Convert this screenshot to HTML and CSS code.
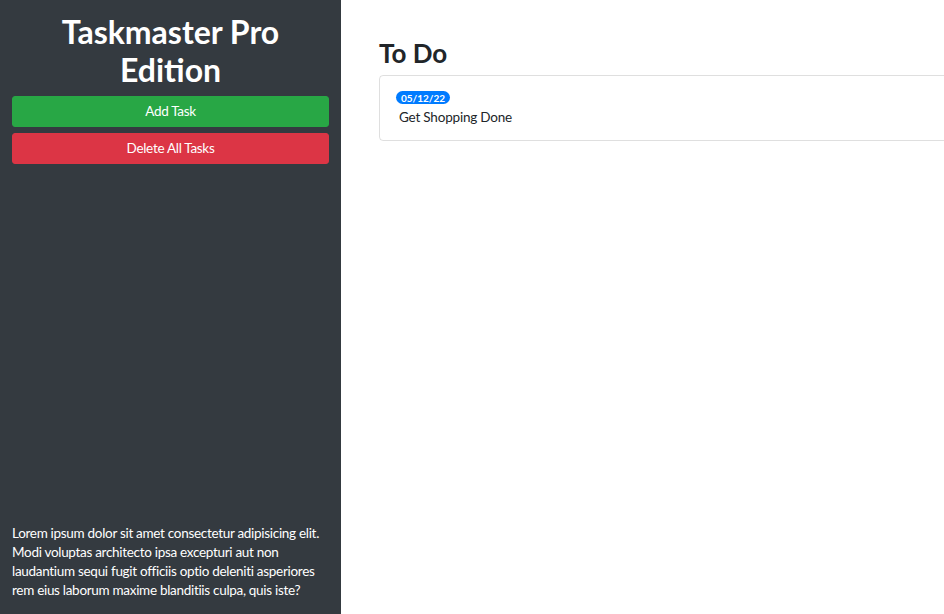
FILE: index.html
```html
<!DOCTYPE html>
<html lang="en">
<head>
<meta charset="utf-8">
<title>Taskmaster Pro</title>
<link rel="stylesheet" href="styles.css">
</head>
<body>
<div class="layout">
  <aside class="sidebar">
    <div class="sidebar-top">
      <h2 class="brand">Taskmaster Pro Edition</h2>
      <button class="btn btn-success">Add Task</button>
      <button class="btn btn-danger">Delete All Tasks</button>
    </div>
    <p class="about">Lorem ipsum dolor sit amet consectetur adipisicing elit. Modi voluptas architecto ipsa excepturi aut non laudantium sequi fugit officiis optio deleniti asperiores rem eius laborum maxime blanditiis culpa, quis iste?</p>
  </aside>
  <main class="main">
    <h4 class="list-title">To Do</h4>
    <ul class="task-list">
      <li class="task-item">
        <span class="badge">05/12/22</span>
        <p class="task-text">Get Shopping Done</p>
      </li>
    </ul>
  </main>
</div>
</body>
</html>
```

FILE: styles.css
```css
* { box-sizing: border-box; }
html, body {
  margin: 0;
  height: 100%;
  overflow: hidden;
}
body {
  font-family: Lato, "Open Sans", "Liberation Sans", sans-serif;
  font-size: 14px;
  color: #212529;
  background: #fff;
}
.layout {
  display: flex;
  height: 614px;
  width: 1200px;
}
.sidebar {
  flex: 0 0 341px;
  background: #343a40;
  color: #fff;
  padding: 13px 12px 14px;
  display: flex;
  flex-direction: column;
  justify-content: space-between;
}
.sidebar-top {
  display: flex;
  flex-direction: column;
  gap: 6px;
}
.brand {
  margin: 0 0 1px;
  font-size: 32px;
  font-weight: 700;
  line-height: 38px;
  text-align: center;
}
.btn {
  font-family: inherit;
  font-size: 13.5px;
  letter-spacing: -0.3px;
  line-height: 21px;
  padding: 4px 8px;
  border: 1px solid transparent;
  border-radius: 3px;
  color: #fff;
  width: 100%;
  text-align: center;
}
.btn-success { background: #28a745; border-color: #28a745; }
.btn-danger { background: #dc3545; border-color: #dc3545; }
.about {
  margin: 0;
  font-size: 13.5px;
  letter-spacing: -0.3px;
  line-height: 19px;
}
.main {
  flex: 0 0 auto;
  width: 760px;
  padding: 39px 0 0 38px;
}
.list-title {
  margin: 0 0 7px;
  font-size: 26px;
  font-weight: 700;
  line-height: 29px;
}
.task-list {
  list-style: none;
  margin: 0;
  padding: 0;
  border: 1px solid rgba(0, 0, 0, 0.125);
  border-radius: 4px;
}
.task-item {
  padding: 12px 20px 12px 16px;
}
.badge {
  display: inline-block;
  background: #007bff;
  color: #fff;
  font-size: 10px;
  font-weight: 700;
  line-height: 1;
  padding: 2px 5px 1px;
  border-radius: 10px;
}
.task-text {
  margin: 2px 0 0 3px;
  font-size: 13.5px;
  letter-spacing: -0.2px;
  line-height: 21px;
}
```
